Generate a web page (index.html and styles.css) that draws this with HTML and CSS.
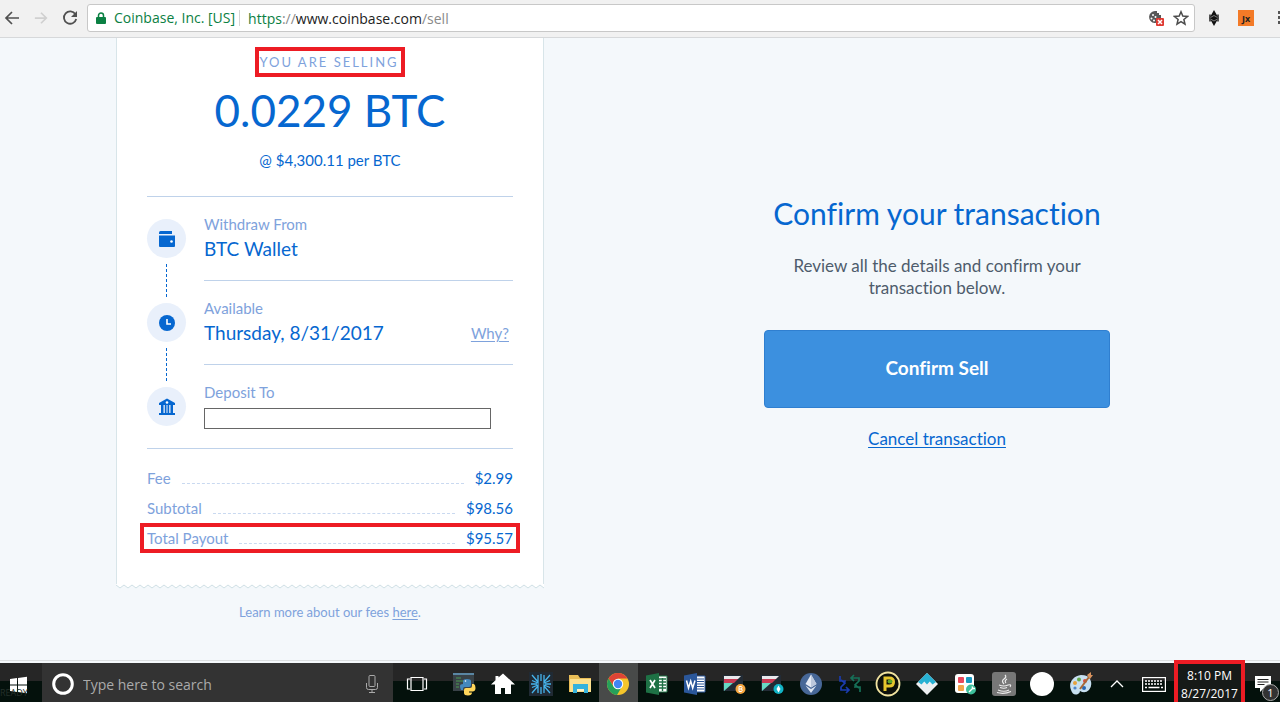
FILE: index.html
```html
<!DOCTYPE html>
<html lang="en">
<head>
<meta charset="utf-8">
<title>Sell - Coinbase</title>
<link rel="stylesheet" href="styles.css">
</head>
<body>
<header class="toolbar">
  <button class="tool" aria-label="Back"><svg width="16" height="16" viewBox="0 0 16 16"><path d="M15 8H2M8 2L2 8l6 6" fill="none" stroke="#505050" stroke-width="1.700"/></svg></button>
  <button class="tool" aria-label="Forward"><svg width="14" height="14" viewBox="0 0 16 16"><path d="M1 8h13M8 2l6 6-6 6" fill="none" stroke="#d0d0d0" stroke-width="2"/></svg></button>
  <button class="tool" aria-label="Reload"><svg width="16" height="16" viewBox="0 0 16 16"><path d="M13.400 4.200A6.200 6.200 0 1 0 14.200 9" fill="none" stroke="#505050" stroke-width="1.800"/><path d="M15 1v6H9z" fill="#505050"/></svg></button>
  <div class="address">
    <svg class="lock" width="10" height="12" viewBox="0 0 10 12"><path d="M1 5h8q1 0 1 1v5q0 1-1 1H1q-1 0-1-1V6q0-1 1-1z" fill="#0b8043"/><path d="M2.500 5.500V3.500a2.500 2.500 0 0 1 5 0v2" fill="none" stroke="#0b8043" stroke-width="1.500"/></svg>
    <span class="owner">Coinbase, Inc. [US]</span>
    <span class="url"><span class="secure">https</span>://<span class="host">www.coinbase.com</span>/sell</span>
    <button class="in-bar" aria-label="Cookies blocked"><svg width="16" height="16" viewBox="0 0 16 16"><path d="M7 1a6 6 0 1 0 6 7V5h-2V3H9V1z" fill="#585858"/><g fill="#fff"><circle cx="5" cy="5" r="1"/><circle cx="3.500" cy="8.500" r="1"/><circle cx="7.500" cy="7" r="1"/><circle cx="6" cy="10.500" r="1"/></g><rect x="8" y="8" width="8" height="8" rx="1" fill="#df3a32"/><path d="M10 10l4 4M14 10l-4 4" stroke="#fff" stroke-width="1.500"/></svg></button>
    <button class="in-bar" aria-label="Bookmark"><svg width="16" height="16" viewBox="0 0 16 16"><path d="M8 1.800l1.800 4.300 4.700.4-3.600 3 1.100 4.600L8 11.700l-4 2.400 1.100-4.600-3.600-3 4.700-.4z" fill="none" stroke="#4c4c4c" stroke-width="1.500"/></svg></button>
  </div>
  <button class="extension" aria-label="Ethereum wallet"><svg width="12" height="16" viewBox="0 0 12 16"><path d="M6 0l4.500 8L6 16 1.500 8z" fill="#111"/><path d="M2 4.500v7M10 4.500v7" stroke="#222" stroke-width="1.500"/><path d="M2.500 7.500L6 5.500l3.500 2M2.500 9L6 11l3.500-2" fill="none" stroke="#999" stroke-width=".8"/></svg></button>
  <button class="extension jaxx">Jx</button>
  <button class="extension" aria-label="Menu"><svg width="4" height="14" viewBox="0 0 4 14"><path d="M0 0h4v3H0zM0 5h4v3H0zM0 10h4v3H0z" fill="#555"/></svg></button>
</header>

<main class="page">
  <section class="order">
    <div class="receipt">
      <p class="kicker">YOU ARE SELLING</p>
      <h1 class="amount">0.0229 BTC</h1>
      <p class="rate">@ $4,300.11 per BTC</p>
      <div class="steps">
        <div class="rail">
          <span class="dot"><svg width="18" height="18" viewBox="0 0 18 18"><path d="M1 2.500Q1 1 2.500 1H14v3H1z" fill="#0667d0"/><path d="M1 5.500h16V16q0 1-1 1H2q-1 0-1-1z" fill="#0667d0"/><circle cx="13.500" cy="11.500" r="1.300" fill="#fff"/></svg></span>
          <span class="link-line"></span>
          <span class="dot"><svg width="18" height="18" viewBox="0 0 18 18"><circle cx="9" cy="9" r="8" fill="#0667d0"/><path d="M9 5v5h4" fill="none" stroke="#fff" stroke-width="1.600"/></svg></span>
          <span class="link-line"></span>
          <span class="dot"><svg width="18" height="18" viewBox="0 0 18 18"><path d="M9 .5l8 4.500v2H1V5zM3 7h2.500v8H3zM6.800 7h1.700v8H6.800zM9.500 7h1.700v8H9.500zM12.500 7H15v8h-2.500zM1 15h16v2H1z" fill="#0667d0"/><circle cx="9" cy="4.500" r="1.300" fill="#fff"/></svg></span>
        </div>
        <div class="details">
          <div class="step"><p class="label">Withdraw From</p><p class="value">BTC Wallet</p></div>
          <div class="step"><p class="label">Available</p><p class="value">Thursday, 8/31/2017 <a class="why" href="#">Why?</a></p></div>
          <div class="step"><label class="label" for="deposit">Deposit To</label><input class="deposit" id="deposit" type="text"></div>
        </div>
      </div>
      <dl class="totals">
        <div class="total"><dt>Fee</dt><dd>$2.99</dd></div>
        <div class="total"><dt>Subtotal</dt><dd>$98.56</dd></div>
        <div class="total marked"><dt>Total Payout</dt><dd>$95.57</dd></div>
      </dl>
    </div>
    <svg class="torn-edge" width="100%" height="5"><defs><pattern id="teeth" width="8" height="5" patternUnits="userSpaceOnUse"><path d="M0 0v1l4 3 4-3V0z" fill="#fff"/><path d="M0 1l4 3 4-3" fill="none" stroke="#cfdfe4"/></pattern></defs><rect width="100%" height="5" fill="url(#teeth)"/></svg>
    <p class="fees">Learn more about our fees <a href="#">here</a>.</p>
  </section>
  <section class="confirm">
    <h2>Confirm your transaction</h2>
    <p class="review">Review all the details and confirm your transaction below.</p>
    <button class="sell">Confirm Sell</button>
    <a class="cancel" href="#">Cancel transaction</a>
  </section>
</main>

<footer class="taskbar">
  <button class="start" aria-label="Start"><svg width="18" height="18" viewBox="0 0 18 18"><path d="M1 3l7-1v6.500H1zM9 1.900L18 .7v7.800H9zM1 9.500h7V16l-7-1zM9 9.500h9v7.800l-9-1.200z" fill="#fff"/></svg><span class="ghost">READY</span></button>
  <div class="search">
    <svg width="24" height="24" viewBox="0 0 24 24"><circle cx="12" cy="12" r="9.300" fill="none" stroke="#fff" stroke-width="3"/></svg>
    <input type="text" placeholder="Type here to search" aria-label="Search">
    <svg width="14" height="20" viewBox="0 0 14 20"><rect x="4" y="1.500" width="6" height="11" rx="1" fill="none" stroke="#aaa"/><path d="M1.500 9v4.500q0 2 2 2h7q2 0 2-2V9M7 15.500V18M4 18.500h6" fill="none" stroke="#aaa"/></svg>
  </div>
  <button class="task-view" aria-label="Task view"><svg width="22" height="16" viewBox="0 0 22 16"><path d="M5 1.500h12v13H5zM4 3H1.500v10H4M18 3h2.500v10H18" fill="none" stroke="#fff" stroke-width="1.200"/></svg></button>
  <div class="apps">
    <button aria-label="Python"><svg width="24" height="24" viewBox="0 0 24 24"><path d="M1 1h21v18H1z" fill="#394248"/><path d="M1 1h21v2H1z" fill="#5a86a3"/><path d="M4 6h5M4 9h7M4 12h3M4 15h3" stroke="#4c9a51"/><path d="M11 12V9q0-2 4-2t4 2v4q0 2-2 2h-4q-2 0-2 2v1H9q-1-2-1-4t3-2h5" fill="#4388bd"/><path d="M20 12h2q1.500 1 1.500 4T21 19.500h-4v1h3q0 3-4 3t-4-2.500v-3q0-2 2-2h4q2 0 2-2z" fill="#ffd65a"/><circle cx="13.500" cy="9" r=".8" fill="#fff"/></svg></button>
    <button aria-label="Home"><svg width="24" height="24" viewBox="0 0 24 24"><path d="M12 1.500l12 11h-4V22h-6v-6h-4v6H4v-9.500H0L4.500 8.300V4h3v1.600z" fill="#fff"/></svg></button>
    <button aria-label="Snowflake"><svg width="24" height="24" viewBox="0 0 24 24"><path d="M0 0h24v24H0z" fill="#202a34"/><path d="M12 2v7M12 22v-7M3 8.500l6 2.500V3M3 3l6 7M21 8.500L15 11V3M21 3l-6 7M3 15.500L9 13v8M3 21l6-7M21 15.500L15 13v8M21 21l-6-7M2 12h6M16 12h6" fill="none" stroke="#46b4ec" stroke-width="1.300"/></svg></button>
    <button aria-label="File Explorer"><svg width="24" height="22" viewBox="0 0 24 22"><path d="M1 2h9l2 3h11v14H1z" fill="#e9bd57"/><path d="M2 6h21v13H2z" fill="#fde08d"/><path d="M5 11h15v9h-4v-4H9v4H5z" fill="#35b2dc"/><path d="M9 16h7v2H9z" fill="#fff3c8"/></svg></button>
    <button class="current" aria-label="Chrome"><svg width="24" height="24" viewBox="0 0 24 24"><circle cx="12" cy="12" r="11" fill="#f5c52b"/><path d="M2.500 6.500A11 11 0 0 1 21.500 6.500H12L7.500 14z" fill="#de4436"/><path d="M2.500 6.500A11 11 0 0 0 11 23l5-8.500-8.500 0z" fill="#26a05a"/><circle cx="12" cy="12" r="5.200" fill="#fff"/><circle cx="12" cy="12" r="4.200" fill="#4285f4"/></svg></button>
    <button aria-label="Excel"><svg width="24" height="22" viewBox="0 0 24 22"><path d="M12 3h10v16H12z" fill="#fff" stroke="#1e7145"/><path d="M14 6h7M14 9h7M14 12h7M14 15h7M17.500 5v13" stroke="#1e7145" stroke-width="1.400"/><path d="M1 2.500L14 0v22L1 19.500z" fill="#1e7145"/><path d="M5 7l5 8M10 7l-5 8" stroke="#fff" stroke-width="1.700"/></svg></button>
    <button aria-label="Word"><svg width="24" height="22" viewBox="0 0 24 22"><path d="M12 3h10v16H12z" fill="#fff" stroke="#2b579a"/><path d="M14 6h7M14 8.500h7M14 11h7M14 13.500h7M14 16h7" stroke="#2b579a"/><path d="M1 2.500L14 0v22L1 19.500z" fill="#2b579a"/><path d="M3.500 7.500L5.500 15 7.700 8l2 7L12 7.500" fill="none" stroke="#fff" stroke-width="1.500"/></svg></button>
    <button aria-label="Bitcoin trader"><svg width="24" height="22" viewBox="0 0 24 22"><path d="M1 2h20v16H1z" fill="#222b35"/><path d="M2 3h17l-3 3H2z" fill="#e9e9ec"/><path d="M2 6h14l-4 4H2z" fill="#c83c55"/><path d="M2 10h9l-9 8z" fill="#67d9c4"/><circle cx="18.500" cy="16" r="5" fill="#f6a740"/><path d="M17 13.500h2.500q1 1.200 0 2.400 1.500 1.200 0 2.600H17zM17 16h3" fill="none" stroke="#fff"/></svg></button>
    <button aria-label="Ethereum trader"><svg width="24" height="22" viewBox="0 0 24 22"><path d="M1 2h20v16H1z" fill="#222b35"/><path d="M2 3h17l-3 3H2z" fill="#e9e9ec"/><path d="M2 6h14l-4 4H2z" fill="#c83c55"/><path d="M2 10h9l-9 8z" fill="#67d9c4"/><circle cx="18.500" cy="16" r="5" fill="#12b4c6"/><path d="M18.500 12.500l2 3.500-2 3.500-2-3.500z" fill="#fff"/></svg></button>
    <button aria-label="Ethereum"><svg width="24" height="24" viewBox="0 0 24 24"><circle cx="12" cy="12" r="11" fill="#476797"/><path d="M12 2.500l5.500 9.500-5.500 3.500L6.500 12z" fill="#e5eaf4"/><path d="M12 2.500l5.500 9.500-5.500 3.500z" fill="#bdc8dc"/><path d="M6.500 13.500L12 17l5.500-3.500L12 21z" fill="#dbe3f0"/></svg></button>
    <button aria-label="Exchange"><svg width="24" height="20" viewBox="0 0 24 20"><path d="M2 2v5h6M3 6L7 9 3 13v3h8M8 13l3 3-3 3" fill="none" stroke="#1b3cae" stroke-width="1.700"/><path d="M22 18v-5h-6M21 14l-4-3 4-4V4h-8M16 1l-3 3 3 3" fill="none" stroke="#167058" stroke-width="1.700"/></svg></button>
    <button aria-label="Peercoin"><svg width="26" height="26" viewBox="0 0 26 26"><circle cx="13" cy="13" r="11.500" fill="#0d100b" stroke="#f1e3a0" stroke-width="1.800"/><path d="M10 20V7h4.500q4 0 4 4t-4 4H10" fill="none" stroke="#e5c52d" stroke-width="3"/><ellipse cx="15" cy="10.500" rx="2.500" ry="2" fill="#5da52a"/></svg></button>
    <button aria-label="Waves"><svg width="24" height="24" viewBox="0 0 24 24"><path d="M12 1l11 11-11 11L1 12z" fill="#edf0f2"/><path d="M12 1l9 9-3.500 2.500-2.800-3-2.700 3-2.700-3-2.800 3L3 10z" fill="#27b1d3"/></svg></button>
    <button aria-label="Tiles"><svg width="24" height="24" viewBox="0 0 24 24"><rect x="2" y="2" width="19" height="19" rx="3" fill="#fff"/><rect x="5" y="5" width="6" height="6" rx="1" fill="#e9495e"/><rect x="13" y="5" width="6" height="6" rx="1" fill="#199ac1"/><rect x="5" y="13" width="6" height="6" rx="1" fill="#f2a64b"/><circle cx="18" cy="17.500" r="5" fill="#3dbf9b"/><path d="M16 20l4-4M19 14.500l1 2 2 0" fill="none" stroke="#fff" stroke-width="1.400"/></svg></button>
    <button aria-label="Java"><svg width="24" height="24" viewBox="0 0 24 24"><rect width="24" height="24" rx="3" fill="#777"/><path d="M13 3q2 2-1 4t0 5M15 7q-3 2-1 4M7 13q5 2 9 0M8 15.500q4 1.500 7 0M6 18q6 2.500 11 0M5 20.500q7 2 14-1M16 13q4-1 2 2" fill="none" stroke="#eee" stroke-width="1.200"/></svg></button>
    <button aria-label="Circle"><svg width="24" height="24" viewBox="0 0 24 24"><circle cx="12" cy="12" r="12" fill="#fff"/></svg></button>
    <button aria-label="Paint"><svg width="24" height="24" viewBox="0 0 24 24"><path d="M12 3C4 4-1 11 2 18q2 6 7 4 2-1 2-3 5 3 9-1 4-5 1-11-2-4-9-4z" fill="#c7dff0"/><circle cx="6" cy="11" r="2" fill="#e6a23d"/><circle cx="10" cy="7.500" r="2" fill="#65a84b"/><circle cx="16" cy="9" r="2" fill="#d84b42"/><circle cx="6" cy="16" r="1.600" fill="#4b85ca"/><circle cx="15" cy="16" r="2" fill="#2767b4"/><path d="M20 5L11 17" stroke="#a76836" stroke-width="2"/><path d="M18 3l4-3v3h2l-3 4z" fill="#d8925e"/></svg></button>
  </div>
  <button class="tray" aria-label="Show hidden icons"><svg width="14" height="10" viewBox="0 0 14 10"><path d="M1 8l6-6 6 6" fill="none" stroke="#fff" stroke-width="1.300"/></svg></button>
  <button class="tray" aria-label="Touch keyboard"><svg width="24" height="15" viewBox="0 0 24 15"><rect x=".6" y=".6" width="22.800" height="13.800" fill="none" stroke="#fff" stroke-width="1.200"/><path d="M3 4h18M3 7h18" stroke="#fff" stroke-width="1.500" stroke-dasharray="2 1"/><path d="M3 10.500h2M6.500 10.500h11M19 10.500h2" stroke="#fff" stroke-width="1.500"/></svg></button>
  <time class="clock" datetime="2017-08-27T20:10"><span>8:10 PM</span><span>8/27/2017</span></time>
  <button class="notices" aria-label="Notifications"><svg width="18" height="18" viewBox="0 0 18 18"><path d="M1 1h16v12h-7l-4 4v-4H1z" fill="#fff"/><path d="M3.500 4.500h11M3.500 7h11M3.500 9.500h7" stroke="#222"/></svg><span class="count">1</span></button>
</footer>
</body>
</html>
```
FILE: styles.css
```css
* { box-sizing: border-box; }
body, h1, h2, p, dl, dd { margin: 0; }
body {
  min-height: 100vh;
  display: flex;
  flex-direction: column;
  background: #f4f8fb;
  color: #0667d0;
  font-family: Lato, "Open Sans", sans-serif;
  font-size: 15px;
  font-variant-ligatures: no-common-ligatures;
}
button {
  padding: 0;
  border: 0;
  background: none;
  color: inherit;
  font: inherit;
  display: flex;
  align-items: center;
  justify-content: center;
}
svg { flex: none; display: block; }

.toolbar {
  height: 38px;
  padding: 4px 0 5px;
  display: flex;
  align-items: center;
  background: #f1f1f1;
  border-bottom: 1px solid #d6d8da;
  font-family: "Open Sans", sans-serif;
  font-size: 14px;
  overflow: hidden;
}
.tool { width: 24px; margin-right: 5px; }
.address {
  flex: 1;
  height: 28px;
  padding: 0 5px 0 8px;
  display: flex;
  align-items: center;
  gap: 8px;
  background: #fff;
  border: 1px solid #c8c8c8;
  border-radius: 3px;
}
.owner { color: #0b8043; padding-right: 4px; border-right: 1px solid #d5d5d5; line-height: 16px; }
.url { flex: 1; color: #8a8a8a; }
.secure { color: #0b8043; }
.host { color: #222; }
.in-bar { width: 17px; }
.extension { width: 22px; margin-left: 8px; }
.extension.jaxx {
  width: 16px;
  height: 16px;
  margin: 0 8px 0 13px;
  background: #f37a27;
  color: #222;
  font-size: 9px;
  font-weight: 700;
}
.extension:last-child { width: 18px; margin: 0 -9px 0 9px; }

.page {
  flex: 1;
  display: grid;
  grid-template-columns: minmax(0, 428px) minmax(0, 346px);
  justify-content: space-between;
  align-items: start;
  padding: 0 170px 0 116px;
  border-bottom: 1px solid #dcdfe1;
}
.receipt {
  display: flex;
  flex-direction: column;
  align-items: stretch;
  padding: 9px 30px 38px;
  background: #fff;
  border: solid #d8e5e9;
  border-width: 0 1px;
}
.kicker {
  align-self: center;
  border: 4px solid #ed1c24;
  padding-right: 2px;
  color: #7ea2dc;
  font-size: 13px;
  line-height: 22px;
  letter-spacing: 2px;
}
.amount {
  padding-top: 7px;
  font-size: 44px;
  line-height: 52px;
  font-weight: 400;
  text-align: center;
}
.rate { padding: 14px 0 26px; line-height: 20px; text-align: center; }
.steps {
  display: flex;
  gap: 18px;
  border: solid #bfd2ea;
  border-width: 1px 0;
}
.rail { width: 39px; padding-top: 22px; display: flex; flex-direction: column; align-items: center; gap: 6px; }
.dot {
  width: 39px;
  height: 39px;
  display: grid;
  place-items: center;
  border-radius: 50%;
  background: #e9f0fb;
}
.link-line { height: 33px; border-left: 1px dashed #0667d0; }
.details { flex: 1; }
.step { height: 84px; padding-top: 17px; border-bottom: 1px solid #bfd2ea; }
.step:last-child { height: 83px; border-bottom: 0; }
.label { display: block; line-height: 20px; color: #7ea2dc; }
.value { display: flex; justify-content: space-between; padding: 3px 4px 0 0; font-size: 19px; line-height: 24px; }
.why { color: #7ea2dc; font-size: 15px; }
.deposit { display: block; width: 287px; max-width: 100%; height: 21px; margin-top: 6px; border: 1px solid #666; background: #fff; }
.totals { padding-top: 21px; display: grid; gap: 14px; }
.total { display: flex; justify-content: space-between; gap: 11px; line-height: 16px; color: #7ea2dc; }
.total dt { flex: 1; display: flex; gap: 11px; }
.total dt::after { content: ""; flex: 1; height: 13px; border-bottom: 1px dashed #c9d9f0; }
.total dd { color: #0667d0; }
.marked { outline: 4px solid #ed1c24; outline-offset: 3px; }
.fees { padding-top: 13px; font-size: 13px; line-height: 20px; text-align: center; color: #7ea2dc; }
a { color: inherit; text-underline-offset: 2px; }

.confirm { padding-top: 155px; text-align: center; }
.confirm h2 { font-size: 30px; line-height: 40px; font-weight: 400; }
.review { padding: 22px 20px 0; color: #4e5c6c; font-size: 17px; line-height: 22px; }
.sell {
  width: 100%;
  height: 78px;
  margin: 31px 0 20px;
  padding-bottom: 3px;
  border: 1px solid #2f7fd0;
  border-radius: 4px;
  background: #3c90df;
  color: #fff;
  font-size: 19px;
  font-weight: 700;
}
.cancel { font-size: 17px; line-height: 22px; }

.taskbar {
  height: 39px;
  display: flex;
  align-items: stretch;
  background: linear-gradient(#262626 0 18px, #04110c 18px);
  color: #fff;
  font-family: "Open Sans", sans-serif;
  margin-top: 2px;
}
.start { position: relative; width: 42px; padding-right: 6px; padding-top: 4px; }
.ghost { position: absolute; left: 0; bottom: 3px; color: #24302b; font-size: 9px; }
.search { width: 351px; display: flex; align-items: center; gap: 8px; padding: 3px 14px 0 9px; background: #333; }
.search input { flex: 1; min-width: 0; padding: 0; border: 0; background: none; font: 14px "Open Sans", sans-serif; color: #fff; }
.search input::placeholder { color: #aaa; }
.task-view { width: 52px; padding-right: 4px; padding-top: 3px; }
.apps { flex: 1; display: grid; grid-template-columns: repeat(17, minmax(0, 1fr)); }
.apps button { padding-top: 3px; }
.apps .current { background: #484a49; }
.tray { width: 37px; padding: 3px 3px 0 0; }
.clock {
  width: 71px;
  margin-top: -3px;
  padding-top: 3px;
  display: flex;
  flex-direction: column;
  align-items: center;
  border: 4px solid #ed1c24;
  border-bottom: 0;
  background: #161a18;
  font-size: 12px;
  line-height: 18px;
}
.notices { position: relative; width: 35px; padding-top: 3px; }
.count {
  position: absolute;
  right: 1px;
  bottom: 1px;
  width: 17px;
  height: 17px;
  border: 1px solid #aaa;
  border-radius: 50%;
  background: #333;
  font-size: 11px;
  line-height: 15px;
}
```
